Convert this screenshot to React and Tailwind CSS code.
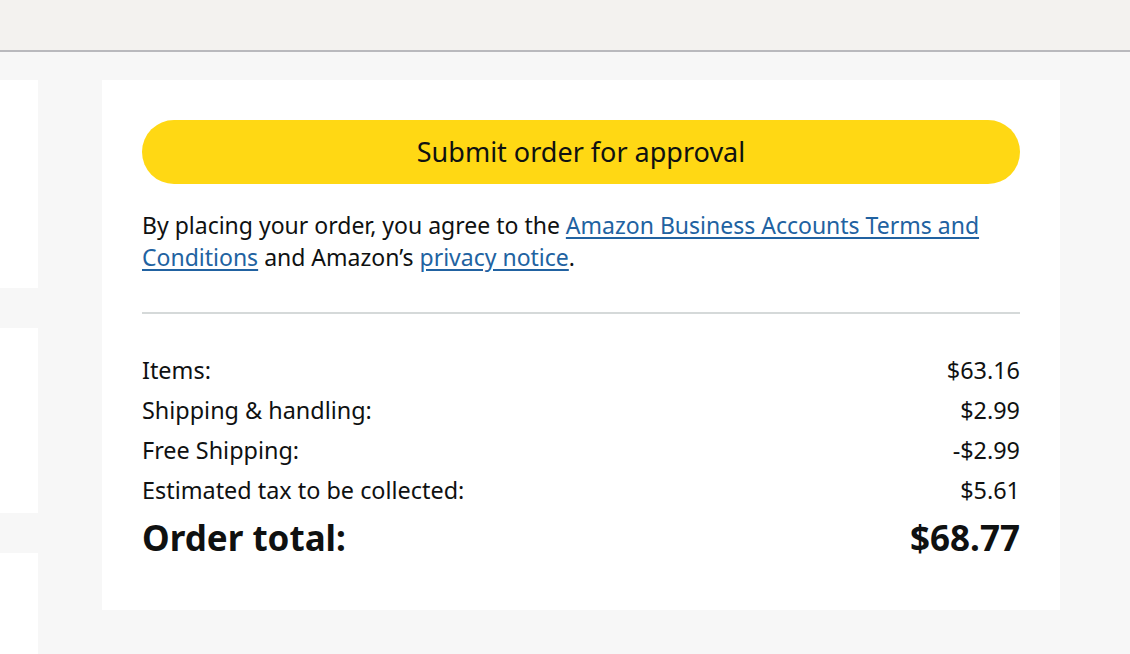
export default function App() {
  const rows = [
    { label: 'Items:', value: '$63.16' },
    { label: 'Shipping & handling:', value: '$2.99' },
    { label: 'Free Shipping:', value: '-$2.99' },
    { label: 'Estimated tax to be collected:', value: '$5.61' },
  ];

  return (
    <div className="w-[1130px] h-[654px] overflow-hidden bg-[#f7f7f7] text-[#0f1111]" style={{ fontFamily: '"Noto Sans", Arial, sans-serif' }}>
      <div className="h-[52px] bg-[#f3f2ef] border-b-2 border-[#b9b9bd]" />
      <div className="flex gap-[64px] pt-[28px]">
        {/* left column, clipped at the viewport edge */}
        <div className="w-[38px] flex flex-col gap-[40px]">
          <div className="h-[208px] bg-white" />
          <div className="h-[185px] bg-white" />
          <div className="h-[120px] bg-white" />
        </div>

        <div className="w-[958px] h-[530px] bg-white px-[40px] pt-[40px]">
          <button className="w-full h-[64px] rounded-full bg-[#ffd814] text-[27px] text-[#0f1111]">
            Submit order for approval
          </button>
          <p className="mt-[25px] text-[23px] leading-[32px]">
            By placing your order, you agree to the{' '}
            <a className="text-[#2162a1] underline underline-offset-[3px]">Amazon Business Accounts Terms and Conditions</a>{' '}
            and Amazon’s <a className="text-[#2162a1] underline underline-offset-[3px]">privacy notice</a>.
          </p>
          <div className="mt-[39px] border-t-2 border-[#d5d9d9]" />
          <div className="mt-[36px] flex flex-col">
            {rows.map(({ label, value }) => (
              <div key={label} className="flex justify-between text-[23.4px] leading-[40px]">
                <span>{label}</span>
                <span>{value}</span>
              </div>
            ))}
            <div className="flex justify-between text-[35px] font-bold leading-[56px]">
              <span>Order total:</span>
              <span>$68.77</span>
            </div>
          </div>
        </div>
      </div>
    </div>
  );
}
